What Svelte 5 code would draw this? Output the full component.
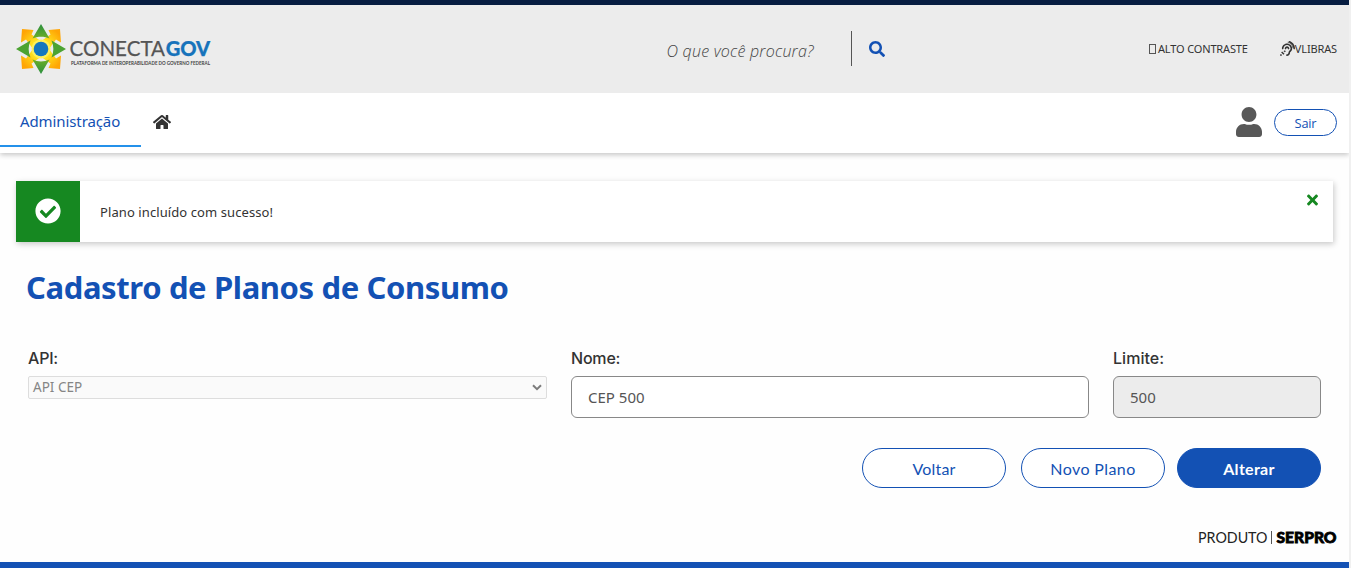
<script>
  const icons = {
    search: 'M505 442.7L405.3 343c-4.5-4.5-10.6-7-17-7H372c27.6-35.3 44-79.7 44-128C416 93.1 322.9 0 208 0S0 93.1 0 208s93.1 208 208 208c48.3 0 92.7-16.4 128-44v16.3c0 6.4 2.5 12.5 7 17l99.7 99.7c9.4 9.4 24.6 9.4 33.9 0l28.3-28.3c9.4-9.4 9.4-24.6.1-34zM208 336c-70.7 0-128-57.2-128-128 0-70.7 57.2-128 128-128 70.7 0 128 57.2 128 128 0 70.7-57.2 128-128 128z',
    user: 'M224 256c70.7 0 128-57.3 128-128S294.7 0 224 0 96 57.3 96 128s57.3 128 128 128zm89.6 32h-16.7c-22.2 10.2-46.9 16-72.9 16s-50.6-5.8-72.9-16h-16.7C60.2 288 0 348.2 0 422.4V464c0 26.5 21.5 48 48 48h352c26.5 0 48-21.5 48-48v-41.6c0-74.2-60.2-134.4-134.4-134.4z',
    check: 'M504 256c0 136.967-111.033 248-248 248S8 392.967 8 256 119.033 8 256 8s248 111.033 248 248zM227.314 387.314l184-184c6.248-6.248 6.248-16.379 0-22.627l-22.627-22.627c-6.248-6.249-16.379-6.249-22.628 0L216 308.118l-70.059-70.059c-6.248-6.248-16.379-6.248-22.628 0l-22.627 22.627c-6.248 6.248-6.248 16.379 0 22.627l104 104c6.249 6.249 16.379 6.249 22.628.001z',
    times: 'M242.72 256l100.07-100.07c12.28-12.28 12.28-32.19 0-44.48l-22.24-22.24c-12.28-12.28-32.19-12.28-44.48 0L176 189.28 75.93 89.21c-12.28-12.28-32.19-12.28-44.48 0L9.21 111.45c-12.28 12.28-12.28 32.19 0 44.48L109.28 256 9.21 356.07c-12.28 12.28-12.28 32.19 0 44.48l22.24 22.24c12.28 12.28 32.2 12.28 44.48 0L176 322.72l100.07 100.07c12.28 12.28 32.2 12.28 44.48 0l22.24-22.24c12.28-12.28 12.28-32.19 0-44.48L242.72 256z',
    home: 'M280.37 148.26L96 300.11V464a16 16 0 0 0 16 16l112.06-.29a16 16 0 0 0 15.92-16V368a16 16 0 0 1 16-16h64a16 16 0 0 1 16 16v95.64a16 16 0 0 0 16 16.05L464 480a16 16 0 0 0 16-16V300L295.67 148.26a12.19 12.19 0 0 0-15.3 0zM571.6 251.47L488 182.56V44.05a12 12 0 0 0-12-12h-56a12 12 0 0 0-12 12v72.61L318.47 43a48 48 0 0 0-61 0L4.34 251.47a12 12 0 0 0-1.6 16.9l25.5 31A12 12 0 0 0 45.15 301l235.22-193.74a12.19 12.19 0 0 1 15.3 0L530.9 301a12 12 0 0 0 16.9-1.6l25.5-31a12 12 0 0 0-1.7-16.93z',
    listening: 'M216 260c0 15.464-12.536 28-28 28s-28-12.536-28-28c0-44.112 35.888-80 80-80s80 35.888 80 80c0 15.464-12.536 28-28 28s-28-12.536-28-28c0-13.234-10.767-24-24-24s-24 10.766-24 24zm24-176c-97.047 0-176 78.953-176 176 0 15.464 12.536 28 28 28s28-12.536 28-28c0-66.168 53.832-120 120-120s120 53.832 120 120c0 75.164-71.009 70.311-71.997 143.622L288 404c0 28.673-23.327 52-52 52-15.464 0-28 12.536-28 28s12.536 28 28 28c59.475 0 107.876-48.328 108-107.774.595-34.428 72-48.24 72-144.226 0-97.047-78.953-176-176-176zm-80 236c-17.673 0-32 14.327-32 32s14.327 32 32 32 32-14.327 32-32-14.327-32-32-32zM32 448c-17.673 0-32 14.327-32 32s14.327 32 32 32 32-14.327 32-32-14.327-32-32-32zm480-187.993c0-1.518-.012-3.025-.045-4.531C510.076 140.525 436.157 38.47 327.994 1.511c-14.633-4.998-30.549 2.809-35.55 17.442-5 14.633 2.81 30.549 17.442 35.55 85.906 29.354 144.61 110.513 146.077 201.953l.003.188c.026 1.118.033 2.236.033 3.363 0 15.464 12.536 28 28 28s28.001-12.536 28.001-28zM152.971 439.029l-80-80L39.03 392.97l80 80 33.941-33.941z'
  };
</script>

<div class="page">
  <header class="top">
    <svg class="logo" width="200" height="56" viewBox="0 0 200 56">
      <defs>
        <linearGradient id="green" x1="0" y1="0" x2="0" y2="1"><stop offset="0" stop-color="#2b9040" /><stop offset="1" stop-color="#6bae27" /></linearGradient>
        <linearGradient id="green2" x1="0" y1="1" x2="0" y2="0"><stop offset="0" stop-color="#2b9040" /><stop offset="1" stop-color="#6bae27" /></linearGradient>
        <radialGradient id="gold" gradientUnits="userSpaceOnUse" cx="25" cy="28" r="26"><stop offset=".3" stop-color="#ffee25" /><stop offset=".55" stop-color="#ffcd14" /><stop offset=".9" stop-color="#ffa505" /></radialGradient>
      </defs>
      <g fill="url(#gold)">
        <path d="M6 8L17.5 9L15.5 13.5L24 19.5V28H17L10 18.5L5 21.5Z" />
        <path d="M44 8L32.5 9L34.5 13.5L26 19.5V28H33L40 18.5L45 21.5Z" />
        <path d="M6 48L17.5 47L15.5 42.5L24 36.5V28H17L10 37.5L5 34.5Z" />
        <path d="M44 48L32.5 47L34.5 42.5L26 36.5V28H33L40 37.5L45 34.5Z" />
      </g>
      <path d="M25 3L33.5 17.5C28 15 22 15 16.5 17.5Z" fill="url(#green)" />
      <path d="M25 53L33.5 38.5C28 41 22 41 16.5 38.5Z" fill="url(#green2)" />
      <path d="M0 28L14.5 19.5C12 25 12 31 14.5 36.5Z" fill="#4ca332" />
      <path d="M50 28L35.5 19.5C38 25 38 31 35.5 36.5Z" fill="#4ca332" />
      <circle cx="25" cy="28" r="9.5" fill="#fff05a" />
      <circle cx="25" cy="28" r="7.3" fill="#1477bd" />
      <text class="brand" x="53.5" y="34.8" textLength="95.5" lengthAdjust="spacingAndGlyphs">CONECTA</text>
      <text class="brand bold" x="149.7" y="34.8" textLength="44.5" lengthAdjust="spacingAndGlyphs">GOV</text>
      <text class="tag" x="55" y="43.8" textLength="139" lengthAdjust="spacingAndGlyphs">PLATAFORMA DE INTEROPERABILIDADE DO GOVERNO FEDERAL</text>
    </svg>
    <div class="search">
      <span class="placeholder">O que você procura?</span>
      <svg width="16" height="16" viewBox="0 0 512 512"><path d={icons.search} /></svg>
    </div>
    <div class="access">
      <span class="item"><i class="box"></i><span>ALTO CONTRASTE</span></span>
      <span class="item"><svg width="15" height="15" viewBox="0 0 512 512"><path d={icons.listening} /><path d="M262 45C350 55 425 130 440 240" fill="none" stroke="#333" stroke-width="22" /></svg><span>VLIBRAS</span></span>
    </div>
  </header>

  <nav>
    <a class="tab" href="#admin"><span>Administração</span></a>
    <svg class="home" width="18" height="16" viewBox="0 0 576 512"><path d={icons.home} /></svg>
    <svg class="user" width="26" height="30" viewBox="0 0 448 512" preserveAspectRatio="none"><path d={icons.user} /></svg>
    <button class="exit">Sair</button>
  </nav>

  <div class="alert">
    <div class="status"><svg width="26" height="26" viewBox="0 0 512 512"><path d={icons.check} /></svg></div>
    <p>Plano incluído com sucesso!</p>
    <svg class="close" width="11" height="16" viewBox="0 0 352 512"><path d={icons.times} /></svg>
  </div>

  <main>
    <h1>Cadastro de Planos de Consumo</h1>
    <div class="fields">
      <div class="field">
        <span class="label">API:</span>
        <div class="select"><span>API CEP</span><svg width="10" height="7" viewBox="0 0 10 7"><path d="M1 1.2L5 5.2L9 1.2" fill="none" stroke="#7c7c7c" stroke-width="2" /></svg></div>
      </div>
      <div class="field">
        <span class="label">Nome:</span>
        <div class="input"><span>CEP 500</span></div>
      </div>
      <div class="field">
        <span class="label limite">Limite:</span>
        <div class="input off"><span>500</span></div>
      </div>
    </div>
    <div class="actions">
      <button>Voltar</button>
      <button class="novo">Novo Plano</button>
      <button class="primary">Alterar</button>
    </div>
  </main>

  <footer>
    <svg width="140" height="18" viewBox="0 0 140 18">
      <text class="produto" x="1" y="14" textLength="69.5" lengthAdjust="spacingAndGlyphs">PRODUTO</text>
      <path d="M74.5 2V15" stroke="#555" stroke-width="1" />
      <text class="serpro" x="79.5" y="14" textLength="60" lengthAdjust="spacingAndGlyphs">SERPRO</text>
    </svg>
  </footer>
</div>

<style>
  :global(body) { background: #f0f0f0; overflow: hidden; }
  .page { box-sizing: border-box; width: 1349px; height: 568px; display: flex; flex-direction: column; background: #fefefe; border-top: 5px solid #071d41; border-bottom: 6px solid #1351b4; font-family: "Noto Sans", "Open Sans", sans-serif; color: #333; }
  svg { display: block; flex: none; }
  button { font: inherit; cursor: pointer; padding: 0; }
  .top { height: 88px; display: flex; background: #ececec; }
  .logo { margin: 16px 0 0 15.5px; }
  .brand { font: 400 21px Lato, sans-serif; fill: #555; stroke: #555; stroke-width: .25; }
  .bold { font-weight: 900; fill: #1773bb; stroke: #1773bb; }
  .tag { font: 700 5px Lato, sans-serif; fill: #444; }
  .search { display: flex; margin-left: 451px; height: 35px; margin-top: 26px; align-items: center; }
  .placeholder { box-sizing: border-box; width: 185px; height: 35px; border-right: 1px solid #555; font: italic 300 16px/41px "Open Sans", sans-serif; letter-spacing: .22px; white-space: nowrap; color: #444; }
  .search svg { margin-left: 17px; fill: #1351b4; }
  .access { margin: 35px 12px 0 auto; height: 17px; display: flex; gap: 32px; font: 400 11px/17px "Noto Sans", sans-serif; letter-spacing: -.14px; color: #333; }
  .item { display: flex; align-items: center; }
  .access svg { fill: #333; }
  .box { box-sizing: border-box; width: 7px; height: 10px; border: 1px solid #555; margin-right: 2px; }
  nav { height: 60px; flex: none; display: flex; background: #fff; box-shadow: 0 2px 5px rgba(0,0,0,.22); clip-path: inset(0 0 -12px 0); }
  .tab { box-sizing: border-box; width: 141px; height: 54px; padding-left: 20px; border-bottom: 2px solid #2491ea; color: #1351b4; text-decoration: none; font: 400 15px/57px "Noto Sans", sans-serif; letter-spacing: -.1px; }
  .home { margin: 21px 0 0 12px; fill: #333; }
  .user { margin: 14px 12px 0 auto; fill: #585858; }
  .exit { box-sizing: border-box; width: 63px; height: 27px; margin: 16px 12px 0 0; border: 1px solid #1351b4; border-radius: 14px; background: #fff; color: #1351b4; font: 400 12.8px/27px "Open Sans", sans-serif; letter-spacing: -.2px; }
  .alert { width: 1317px; height: 61px; flex: none; margin: 28px 0 0 16px; display: flex; background: #fff; box-shadow: 1px 2px 6px rgba(0,0,0,.22); }
  .status { width: 64px; display: grid; place-items: center; padding-bottom: 2px; box-sizing: border-box; background: #168821; }
  .status svg { fill: #fff; }
  .alert p { margin: 0 auto 0 20px; font: 400 13px/62px "Noto Sans", sans-serif; letter-spacing: .09px; }
  .close { margin: 11px 15px 0 0; fill: #168821; }
  main { padding: 0 28px; }
  h1 { margin: 23px 0 0 -2px; height: 46px; font: 700 31px/45px "Noto Sans", sans-serif; letter-spacing: -.38px; color: #1351b4; white-space: nowrap; }
  .fields { display: grid; grid-template-columns: 519px 518px 208px; column-gap: 24px; margin-top: 31px; }
  .label { display: block; height: 34px; font: 500 16px/32px Inter, sans-serif; color: #333; letter-spacing: -.2px; }
  .limite { letter-spacing: .05px; }
  .select { box-sizing: border-box; height: 23px; display: flex; align-items: center; justify-content: space-between; padding: 0 4px; border: 1px solid #ddd; border-radius: 2px; background: #fafafa; color: #858585; font: 400 13.5px/23px "Noto Sans", sans-serif; }
  .input { box-sizing: border-box; height: 42px; padding-left: 16px; border: 1px solid #888; border-radius: 6px; background: #fff; color: #555; font: 400 15px/40px "Noto Sans", sans-serif; }
  .off { background: #ececec; }
  .actions { display: flex; justify-content: flex-end; margin-top: 30px; }
  .actions button { box-sizing: border-box; width: 144px; height: 40px; border: 1px solid #1351b4; border-radius: 20px; background: #fff; color: #1351b4; font: 400 16px/40px Lato, sans-serif; letter-spacing: .2px; }
  .actions .novo { margin: 0 12px 0 15px; letter-spacing: .4px; }
  .actions .primary { background: #1351b4; color: #fff; font-weight: 700; letter-spacing: .3px; }
  footer { display: flex; justify-content: flex-end; margin: auto 12px 15px 0; }
  .produto { font: 400 15px Lato, sans-serif; fill: #222; }
  .serpro { font: 900 15px Lato, sans-serif; fill: #000; stroke: #000; stroke-width: .8; }
</style>
